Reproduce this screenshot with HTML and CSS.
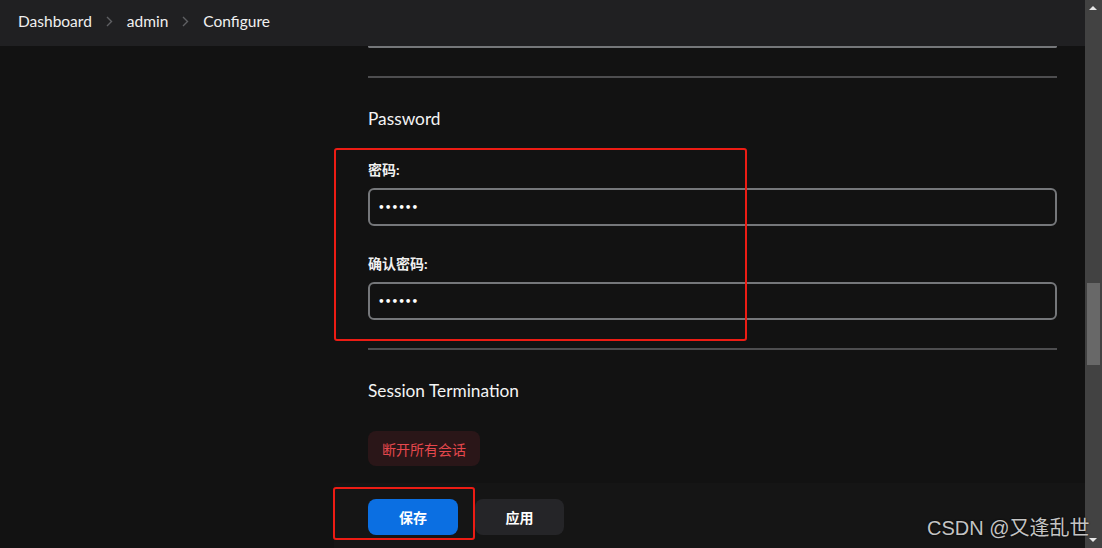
FILE: index.html
```html
<!DOCTYPE html>
<html lang="zh-CN">
<head>
    <meta charset="utf-8" />
    <title>Configure [Jenkins]</title>
    <link rel="stylesheet" href="styles.css">
</head>
<body>
    <div class="page">
        <div class="main">
            <div class="header">
                <span class="crumb">Dashboard</span>
                <svg class="chev" width="7" height="11" viewBox="0 0 7 11"><path d="M1 1l4.5 4.5L1 10" fill="none" stroke="#5f6063" stroke-width="1.4"/></svg>
                <span class="crumb">admin</span>
                <svg class="chev" width="7" height="11" viewBox="0 0 7 11"><path d="M1 1l4.5 4.5L1 10" fill="none" stroke="#5f6063" stroke-width="1.4"/></svg>
                <span class="crumb">Configure</span>
            </div>
            <div class="layout">
                <div class="sidebar"></div>
                <div class="content">
                    <div class="field-tail"></div>
                    <div class="divider"></div>
                    <h2 class="section-title">Password</h2>
                    <label class="label">密码:</label>
                    <input class="input" type="password" value="123456" />
                    <label class="label label2">确认密码:</label>
                    <input class="input input2" type="password" value="123456" />
                    <div class="divider divider2"></div>
                    <h2 class="section-title">Session Termination</h2>
                    <button class="btn-danger">断开所有会话</button>
                    <div class="bottom-bar">
                        <button class="btn btn-primary">保存</button>
                        <button class="btn btn-secondary">应用</button>
                    </div>
                </div>
            </div>
        </div>
        <div class="scrollbar">
            <div class="arrow-up"></div>
            <div class="thumb"></div>
            <div class="arrow-down"></div>
        </div>
    </div>

    <!-- 截图标注 -->
    <div class="mark mark-pass"></div>
    <div class="mark mark-save"></div>
    <div class="watermark">CSDN @又逢乱世</div>
</body>
</html>
```

FILE: styles.css
```css
* {margin: 0;padding: 0;box-sizing: border-box;}
html, body {height: 100%;overflow: hidden;}
body {background: #121212;color: #f2f2f2;font-family: Lato, "Noto Sans CJK SC", sans-serif;}
.page {display: flex;height: 548px;}
.main {flex: 1;display: flex;flex-direction: column;overflow: hidden;}

/*顶部导航*/
.header {position: relative;z-index: 2;flex-shrink: 0;height: 46px;background: #202022;display: flex;align-items: center;padding: 0 0 4px 18px;font-size: 15.5px;}
.crumb {color: #f0f0f0;}
.chev {margin: 1px 14px 0;}

.layout {display: flex;flex: 1;}
.sidebar {width: 368px;flex-shrink: 0;}
.content {width: 689px;flex-shrink: 0;display: flex;flex-direction: column;}

.field-tail {height: 2px;flex-shrink: 0;border: 2px solid #75777a;border-top: 0;border-radius: 0 0 5px 5px;}
.divider {height: 2px;flex-shrink: 0;background: #4d4d4f;margin-top: 28px;}
.divider2 {margin-top: 28px;}

.section-title {font-size: 17.3px;font-weight: normal;line-height: 20px;margin-top: 31px;color: #f4f4f4;}
.label {display: block;font-size: 14px;font-weight: bold;line-height: 20px;margin-top: 31px;color: #f0f0f0;}
.label2 {margin-top: 28px;}
.input {height: 38px;flex-shrink: 0;margin-top: 8px;background: #121212;border: 2px solid #75777a;border-radius: 6px;padding: 0 8px;color: #fff;font-size: 10.5px;font-weight: bold;font-family: "DejaVu Sans", sans-serif;outline: none;}
.input2 {margin-top: 8px;}

.btn-danger {align-self: flex-start;flex-shrink: 0;margin-top: 30px;height: 35px;padding: 0 14px;background: #2a1618;color: #e5484d;border: 0;border-radius: 8px;font-size: 14px;font-family: Lato, "Noto Sans CJK SC", sans-serif;}

/*底部按钮*/
.bottom-bar {display: flex;flex-shrink: 0;gap: 17px;margin: 17px -29px 0 -34px;padding: 16px 0 13px 34px;background: #151515;}
.btn {height: 36px;border: 0;border-radius: 8px;font-size: 14px;font-weight: bold;color: #fff;font-family: Lato, "Noto Sans CJK SC", sans-serif;}
.btn-primary {width: 90px;background: #0b6fe2;}
.btn-secondary {width: 89px;background: #252528;}

/*滚动条*/
.scrollbar {width: 17px;background: #424242;position: relative;}
.arrow-up {position: absolute;top: 6px;left: 4px;width: 0;height: 0;border-left: 4.5px solid transparent;border-right: 4.5px solid transparent;border-bottom: 4px solid #e6e6e6;}
.arrow-down {position: absolute;bottom: 6px;left: 4px;width: 0;height: 0;border-left: 4.5px solid transparent;border-right: 4.5px solid transparent;border-top: 4px solid #e6e6e6;}
.thumb {position: absolute;top: 283px;left: 2px;width: 13px;height: 82px;background: #686868;}

/*标注*/
.mark {position: absolute;border: 2px solid #ec1c14;border-radius: 3px;}
.mark-pass {left: 334px;top: 148px;width: 413px;height: 193px;}
.mark-save {left: 333px;top: 487px;width: 142px;height: 53px;}
.watermark {position: absolute;left: 927px;top: 512px;font-family: "Liberation Sans", "Noto Sans CJK SC", sans-serif;font-size: 20px;color: #c4c4c4;text-shadow: 0 0 2px #000;}
```
